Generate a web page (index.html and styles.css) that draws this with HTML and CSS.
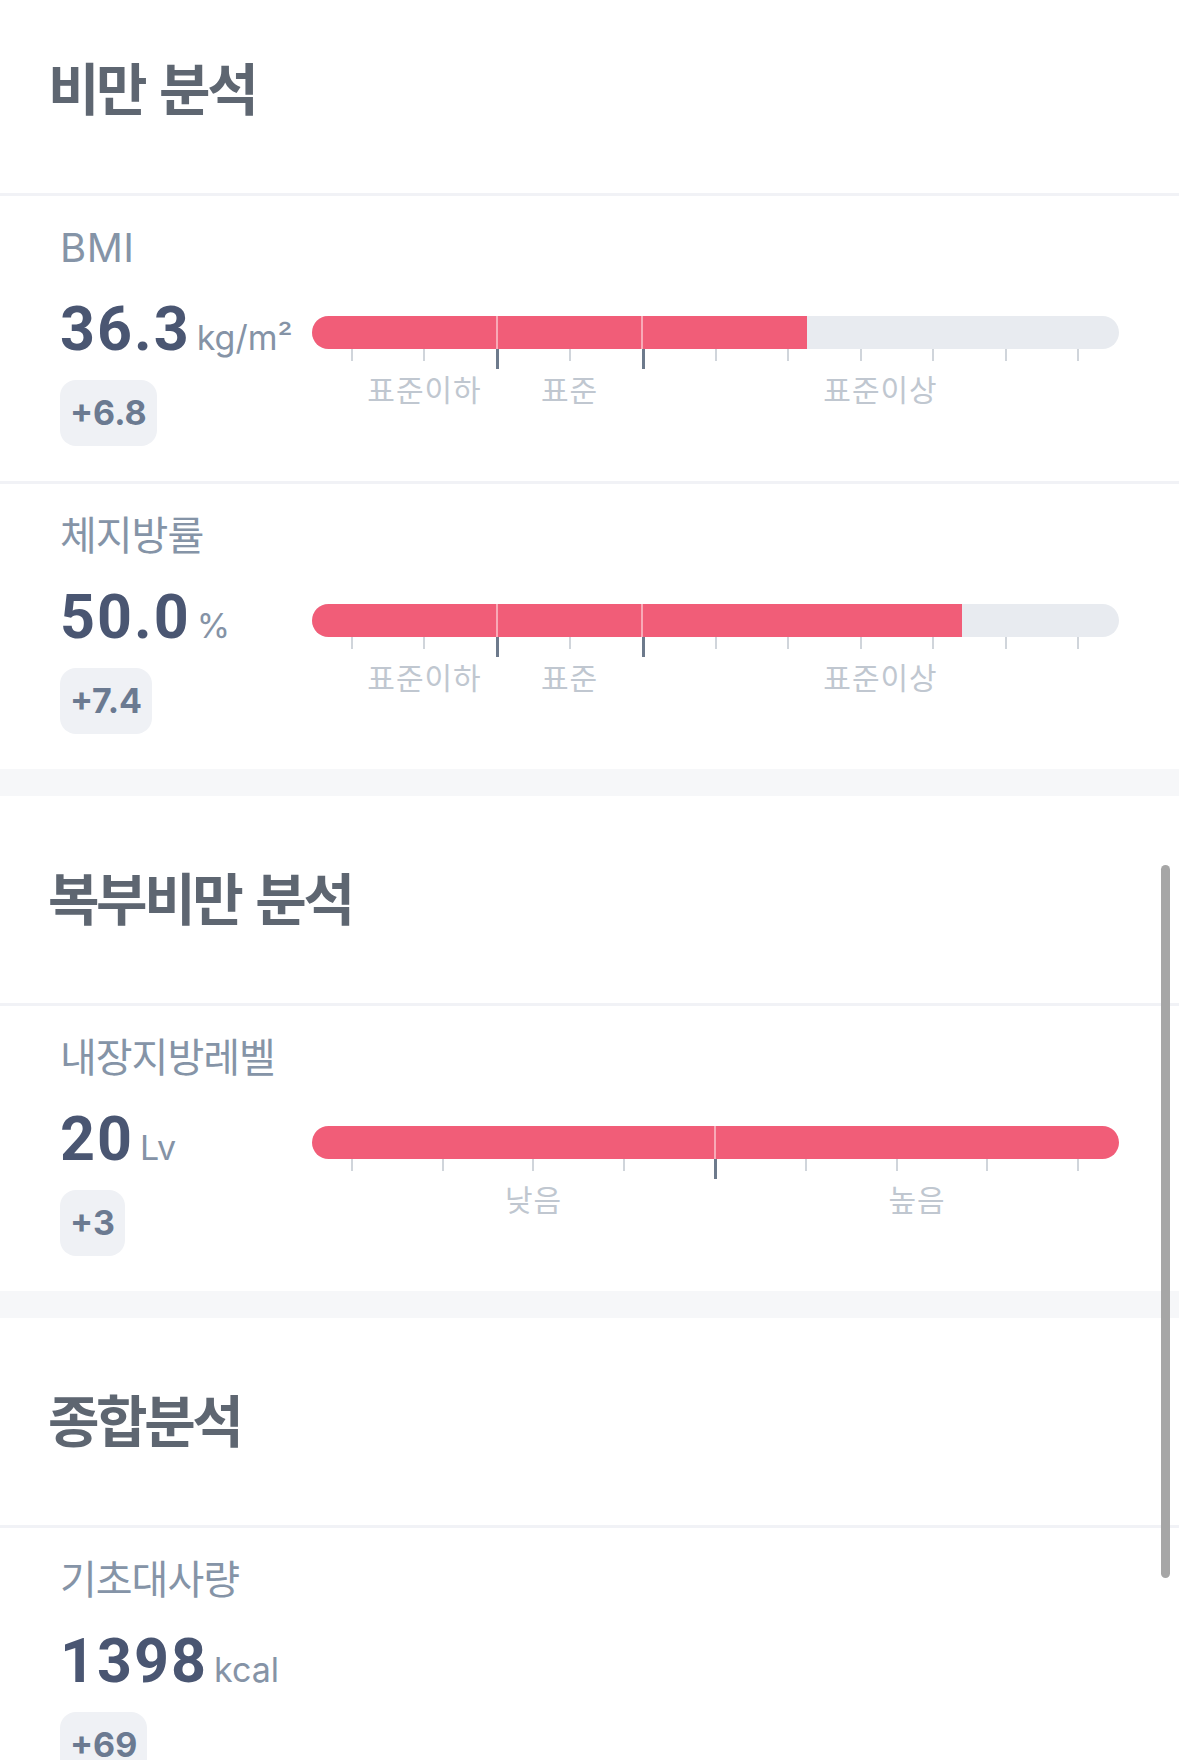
FILE: index.html
```html
<!DOCTYPE html>
<html lang="ko">
<head>
<meta charset="utf-8">
<title>체성분 분석</title>
<link rel="stylesheet" href="styles.css">
</head>
<body>
<div class="screen">
  <section class="section">
    <header class="section-head"><h2 class="section-title">비만 분석</h2></header>
    <div class="metric">
      <div class="metric-info">
        <div class="metric-label latin">BMI</div>
        <div class="metric-value"><span class="num">36.3</span><span class="unit">kg/m²</span></div>
        <div class="delta">+6.8</div>
      </div>
      <div class="gauge">
        <div class="track">
          <div class="fill" style="width:61.3%"></div>
          <i class="split" style="left:185px"></i>
          <i class="split" style="left:330px"></i>
        </div>
        <div class="ticks"><i></i><i></i><i class="major"></i><i></i><i class="major"></i><i></i><i></i><i></i><i></i><i></i><i></i></div>
        <div class="scale"><span style="width:145px">표준이하</span><span style="width:145px">표준</span><span class="rest">표준이상</span></div>
      </div>
    </div>
    <div class="metric">
      <div class="metric-info">
        <div class="metric-label">체지방률</div>
        <div class="metric-value"><span class="num">50.0</span><span class="unit">%</span></div>
        <div class="delta">+7.4</div>
      </div>
      <div class="gauge">
        <div class="track">
          <div class="fill" style="width:80.5%"></div>
          <i class="split" style="left:185px"></i>
          <i class="split" style="left:330px"></i>
        </div>
        <div class="ticks"><i></i><i></i><i class="major"></i><i></i><i class="major"></i><i></i><i></i><i></i><i></i><i></i><i></i></div>
        <div class="scale"><span style="width:145px">표준이하</span><span style="width:145px">표준</span><span class="rest">표준이상</span></div>
      </div>
    </div>
  </section>

  <section class="section">
    <header class="section-head"><h2 class="section-title">복부비만 분석</h2></header>
    <div class="metric">
      <div class="metric-info">
        <div class="metric-label">내장지방레벨</div>
        <div class="metric-value"><span class="num">20</span><span class="unit">Lv</span></div>
        <div class="delta">+3</div>
      </div>
      <div class="gauge">
        <div class="track">
          <div class="fill" style="width:100%"></div>
          <i class="split" style="left:403px"></i>
        </div>
        <div class="ticks"><i></i><i></i><i></i><i></i><i class="major"></i><i></i><i></i><i></i><i></i></div>
        <div class="scale"><span style="width:363px">낮음</span><span class="rest">높음</span></div>
      </div>
    </div>
  </section>

  <section class="section">
    <header class="section-head"><h2 class="section-title">종합분석</h2></header>
    <div class="metric">
      <div class="metric-info">
        <div class="metric-label">기초대사량</div>
        <div class="metric-value"><span class="num">1398</span><span class="unit">kcal</span></div>
        <div class="delta">+69</div>
      </div>
    </div>
  </section>
</div>
<div class="scrollbar"></div>
</body>
</html>
```

FILE: styles.css
```css
html, body {
  margin: 0;
  height: 1760px;
  overflow: hidden;
  background: #f6f7f9;
}

body {
  display: flow-root;
  position: relative;
  font-family: "Inter", "Noto Sans CJK KR", sans-serif;
}

.screen {
  margin-top: -14px;
}

.section {
  background: #ffffff;
  margin-bottom: 27px;
}

.section-head {
  height: 207px;
  display: flex;
  align-items: center;
  padding-left: 48px;
  border-bottom: 3px solid #f1f2f6;
}

.section-title {
  margin: 0;
  font-size: 56px;
  line-height: 62px;
  font-weight: 700;
  letter-spacing: -3.4px;
  word-spacing: 5px;
  color: #5e6671;
}

.metric {
  display: flex;
  height: 285px;
  padding: 0 60px;
  border-bottom: 3px solid #f1f2f6;
}

.metric:last-child {
  border-bottom: 0;
}

.metric-info {
  width: 252px;
  flex-shrink: 0;
  padding-top: 28px;
  display: flex;
  flex-direction: column;
  align-items: flex-start;
}

.metric-label {
  font-size: 40px;
  line-height: 48px;
  letter-spacing: -1px;
  color: #8594a7;
}

.metric-label.latin {
  letter-spacing: 0.5px;
}

.metric-value {
  margin-top: 26px;
  font-size: 60px;
  line-height: 60px;
  font-weight: 700;
  color: #4a5672;
  white-space: nowrap;
}

.num {
  font-family: "Roboto", "Inter", sans-serif;
  font-size: 61px;
  letter-spacing: 2px;
}

.unit {
  margin-left: 6px;
  font-size: 34px;
  line-height: 1;
  font-weight: 400;
  letter-spacing: 0;
  color: #8593a6;
}

.delta {
  margin-top: 21px;
  height: 66px;
  line-height: 66px;
  padding: 0 10px;
  border-radius: 16px;
  background: #eff1f5;
  color: #6b7a91;
  font-size: 34px;
  font-weight: 700;
}

.gauge {
  flex: 1;
  padding-top: 120px;
}

.track {
  position: relative;
  height: 33px;
  border-radius: 17px;
  background: #e8ebf0;
  overflow: hidden;
}

.fill {
  height: 100%;
  background: #f15d78;
}

.split {
  position: absolute;
  top: 0;
  bottom: 0;
  width: 2px;
  margin-left: -1px;
  background: #f8aab7;
}

.ticks {
  display: flex;
  justify-content: space-between;
  align-items: flex-start;
  height: 20px;
  padding: 0 40px 0 39px;
}

.ticks i {
  width: 2px;
  height: 12px;
  background: #d0d5db;
}

.ticks i.major {
  width: 3px;
  height: 20px;
  background: #6d7a8c;
}

.scale {
  display: flex;
  margin-top: 3px;
  padding-left: 40px;
  font-size: 30px;
  line-height: 36px;
  letter-spacing: 1px;
  color: #c0c7d0;
}

.scale span {
  flex-shrink: 0;
  text-align: center;
}

.scale .rest {
  flex: 1;
}

.scrollbar {
  position: absolute;
  top: 865px;
  right: 9px;
  width: 9px;
  height: 713px;
  border-radius: 5px;
  background: #a6a6a6;
}
```
